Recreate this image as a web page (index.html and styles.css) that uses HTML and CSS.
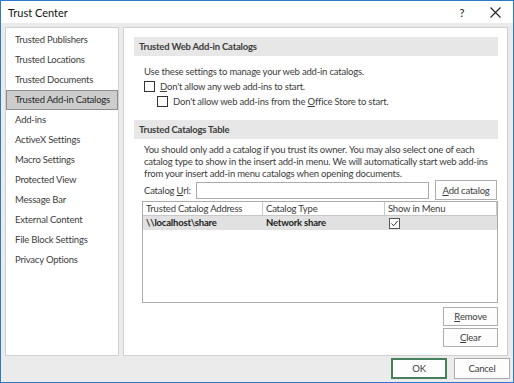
FILE: index.html
```html
<!DOCTYPE html>
<html lang="en">
<head>
    <meta charset="UTF-8">
    <title>Trust Center</title>
    <link rel="stylesheet" href="styles.css">
</head>
<body>
    <div class="window">
        <div class="titlebar">
            <span class="title">Trust Center</span>
            <span class="help">?</span>
            <span class="close">
                <svg width="11" height="11" viewBox="0 0 11 11"><path d="M0.5 0.5 L10.5 10.5 M10.5 0.5 L0.5 10.5" stroke="#222" stroke-width="1.1" fill="none"/></svg>
            </span>
        </div>

        <div class="frame">
            <div class="content">
                <ul class="nav">
                    <li>Trusted Publishers</li>
                    <li>Trusted Locations</li>
                    <li>Trusted Documents</li>
                    <li class="active">Trusted Add-in Catalogs</li>
                    <li>Add-ins</li>
                    <li>ActiveX Settings</li>
                    <li>Macro Settings</li>
                    <li>Protected View</li>
                    <li>Message Bar</li>
                    <li>External Content</li>
                    <li>File Block Settings</li>
                    <li>Privacy Options</li>
                </ul>

                <div class="panel">
                    <div class="section-head">Trusted Web Add-in Catalogs</div>
                    <div class="section-body">
                        <p class="intro">Use these settings to manage your web add-in catalogs.</p>
                        <div class="check"><span class="box"></span><span><u>D</u>on't allow any web add-ins to start.</span></div>
                        <div class="check sub"><span class="box"></span><span>Don't allow web add-ins from the <u>O</u>ffice Store to start.</span></div>
                    </div>

                    <div class="section-head second">Trusted Catalogs Table</div>
                    <div class="section-body">
                        <p class="note">You should only add a catalog if you trust its owner. You may also select one of each<br>catalog type to show in the insert add-in menu. We will automatically start web add-ins<br>from your insert add-in menu catalogs when opening documents.</p>
                        <div class="url-row">
                            <span class="url-label">Catalog <u>U</u>rl:</span>
                            <span class="url-input"></span>
                            <span class="btn add-btn"><u>A</u>dd catalog</span>
                        </div>
                        <div class="catalogs">
                            <div class="row head">
                                <div class="cell c1">Trusted Catalog Address</div>
                                <div class="cell c2">Catalog Type</div>
                                <div class="cell c3">Show in Menu</div>
                            </div>
                            <div class="row data">
                                <div class="cell c1">\\localhost\share</div>
                                <div class="cell c2">Network share</div>
                                <div class="cell c3">
                                    <span class="box checked">
                                        <svg width="9" height="9" viewBox="0 0 9 9"><path d="M1.5 4.5 L3.6 6.8 L7.8 1.8" stroke="#333" stroke-width="1" fill="none"/></svg>
                                    </span>
                                </div>
                            </div>
                        </div>
                        <div class="side-buttons">
                            <span class="btn"><u>R</u>emove</span>
                            <span class="btn"><u>C</u>lear</span>
                        </div>
                    </div>
                </div>
            </div>

            <div class="footer">
                <span class="btn ok">OK</span>
                <span class="btn">Cancel</span>
            </div>
        </div>
    </div>
</body>
</html>
```

FILE: styles.css
```css
/* Trust Center dialog */
body {
    margin: 0;
    font-family: Lato, "Open Sans", sans-serif;
    font-size: 9.5px;
    letter-spacing: -0.2px;
    color: #3c3c3c;
}

.window {
    width: 514px;
    height: 383px;
    box-sizing: border-box;
    border: 1px solid #2b79c9;
    background-color: #ebebeb;
    display: flex;
    flex-direction: column;
}

.titlebar {
    height: 22px;
    background-color: #ffffff;
    display: flex;
    align-items: center;
    padding-left: 7px;
    color: #111;
    font-size: 11px;
    letter-spacing: 0;
}

.title {
    flex: 1;
}

.help {
    width: 20px;
    margin-right: 18px;
    text-align: center;
}

.close {
    width: 14px;
    margin-right: 9px;
    display: flex;
    align-items: center;
}

.frame {
    flex: 1;
    display: flex;
    flex-direction: column;
    padding: 4px 5px 0 4px;
}

.content {
    display: flex;
    gap: 4px;
    height: 329px;
}

/* left navigation */
.nav {
    list-style: none;
    margin: 0;
    padding: 2px 0 0 0;
    width: 114px;
    flex-shrink: 0;
    box-sizing: border-box;
    background-color: #ffffff;
    border: 1px solid #d0d0d0;
}

.nav li {
    height: 20px;
    line-height: 18px;
    padding-left: 8px;
    box-sizing: border-box;
    border: 1px solid transparent;
    white-space: nowrap;
}

.nav li.active {
    background-color: #cdcdcd;
    border-color: #8c8c8c;
    color: #262626;
}

/* right panel */
.panel {
    flex: 1;
    min-width: 0;
    background-color: #ffffff;
    border: 1px solid #d0d0d0;
    padding: 9px 9px 0 10px;
}

.section-head {
    height: 19px;
    line-height: 19px;
    background-color: #e7e7e7;
    padding-left: 5px;
    font-weight: bold;
}

.section-head.second {
    margin-top: 11px;
}

.section-body {
    padding-left: 10px;
}

.intro {
    margin: 8px 0 0 0;
    line-height: 15px;
}

.check {
    display: flex;
    align-items: center;
    gap: 5px;
    height: 15px;
}

.check.sub {
    padding-left: 13px;
}

.box {
    width: 11px;
    height: 11px;
    flex-shrink: 0;
    box-sizing: border-box;
    border: 1px solid #333;
    background-color: #ffffff;
    display: inline-flex;
    align-items: center;
    justify-content: center;
}

.note {
    margin: 5px 0 0 0;
    line-height: 12px;
    white-space: nowrap;
}

.url-row {
    display: flex;
    align-items: center;
    height: 20px;
}

.url-label {
    width: 52px;
    white-space: nowrap;
}

.url-input {
    width: 233px;
    height: 17px;
    box-sizing: border-box;
    border: 1px solid #ababab;
    background-color: #ffffff;
}

.btn {
    display: inline-flex;
    align-items: center;
    justify-content: center;
    box-sizing: border-box;
    border: 1px solid #adadad;
    background-color: #fdfdfd;
    height: 20px;
    width: 56px;
    white-space: nowrap;
}

.add-btn {
    width: 62px;
    margin-left: 6px;
}

.catalogs {
    margin-top: 1px;
    margin-left: -2px;
    height: 102px;
    box-sizing: border-box;
    border: 1px solid #ababab;
    background-color: #ffffff;
}

.row {
    display: flex;
    height: 14px;
    line-height: 13px;
}

.row.head .cell {
    border-right: 1px solid #c8c8c8;
    border-bottom: 1px solid #c8c8c8;
}

.row.data {
    background-color: #e1e1e1;
    color: #222;
    font-weight: bold;
}

.cell {
    box-sizing: border-box;
    padding-left: 3px;
    white-space: nowrap;
}

.c1 {
    width: 120px;
}

.c2 {
    width: 122px;
}

.c3 {
    flex: 1;
    display: flex;
    align-items: center;
}

.row.data .c3 {
    padding-left: 4px;
}

.box.checked {
    border-color: #555;
}

.side-buttons {
    display: flex;
    flex-direction: column;
    align-items: flex-end;
    gap: 2px;
    margin-top: 4px;
}

.side-buttons .btn {
    height: 19px;
    width: 55px;
}

.footer {
    display: flex;
    justify-content: flex-end;
    gap: 7px;
    margin-top: 2px;
    margin-right: -2px;
}

.footer .btn {
    width: 56px;
    height: 21px;
}

.footer .ok {
    border: 2px solid #46805d;
}
```
